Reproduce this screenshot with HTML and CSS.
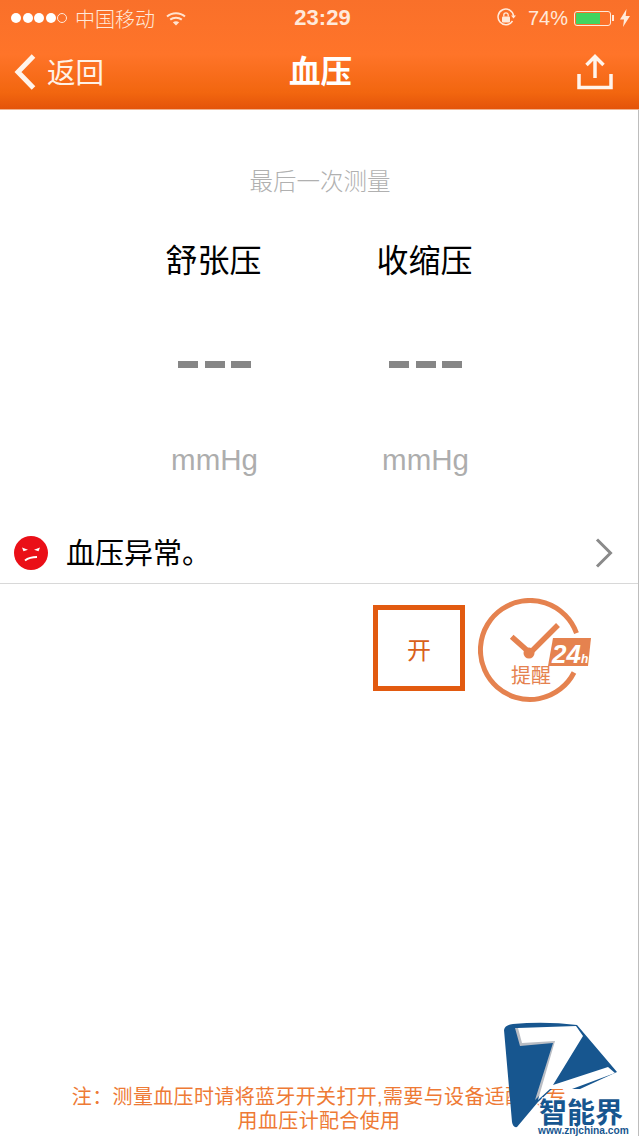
FILE: index.html
```html
<!DOCTYPE html>
<html lang="zh-CN">
<head>
  <meta charset="UTF-8" />
  <meta name="viewport" content="width=device-width, initial-scale=1.0" />
  <title>血压</title>
  <link rel="stylesheet" href="styles.css">
</head>
<body>
  <div class="page">

    <header class="topbar">
      <div class="status">
        <div class="status-left">
          <span class="signal"><i></i><i></i><i></i><i></i><i class="off"></i></span>
          <span class="carrier">中国移动</span>
          <svg class="wifi" viewBox="0 0 20 15" width="20" height="15">
            <path d="M1 5.500C6 1 14 1 19 5.500" fill="none" stroke="#ffe3d0" stroke-width="2"/>
            <path d="M4.200 8.600C7.500 6 12.500 6 15.800 8.600" fill="none" stroke="#ffe3d0" stroke-width="2"/>
            <path d="M10 14.500L6.800 11.200C8.800 9.800 11.200 9.800 13.200 11.200Z" fill="#ffe3d0"/>
          </svg>
        </div>
        <div class="clock">23:29</div>
        <div class="status-right">
          <svg viewBox="0 0 20 20" width="20" height="20">
            <path d="M16.500 13A7.800 7.800 0 1 1 17.600 8" fill="none" stroke="#ffe9da" stroke-width="1.500"/>
            <path d="M15 7.500h5l-2.500 3z" fill="#ffe9da"/>
            <rect x="6" y="8.500" width="8" height="6" rx="1" fill="#ffe9da"/>
            <path d="M7.800 8.500V7a2.200 2.200 0 0 1 4.400 0v1.500" fill="none" stroke="#ffe9da" stroke-width="1.300"/>
          </svg>
          <span class="percent">74%</span>
          <span class="battery"><span class="battery-fill" style="width: 74%"></span></span>
          <span class="battery-tip"></span>
          <svg class="bolt" viewBox="0 0 10 18" width="10" height="18">
            <path d="M6.500 0L0 10.500h4L3 18l7-11H5.700z" fill="#ffe9da"/>
          </svg>
        </div>
      </div>
      <nav class="nav">
        <div class="back">
          <svg viewBox="0 0 22 36" width="22" height="36">
            <path d="M19.500 2L4 18l15.500 16" fill="none" stroke="#fff4ec" stroke-width="5"/>
          </svg>
          <span class="back-label">返回</span>
        </div>
        <div class="nav-title">血压</div>
        <svg class="share" viewBox="0 0 36 36" width="36" height="36">
          <path d="M18 24V3M9.500 11L18 2.500 26.500 11" fill="none" stroke="#fff4ec" stroke-width="3.500"/>
          <path d="M2 20v13.500h32V20" fill="none" stroke="#fff4ec" stroke-width="3.500"/>
        </svg>
      </nav>
    </header>

    <main class="content">
      <div class="caption">最后一次测量</div>

      <div class="readings">
        <div class="reading">
          <div class="reading-name">舒张压</div>
          <div class="dashes"><i></i><i></i><i></i></div>
          <div class="reading-unit">mmHg</div>
        </div>
        <div class="reading">
          <div class="reading-name">收缩压</div>
          <div class="dashes"><i></i><i></i><i></i></div>
          <div class="reading-unit">mmHg</div>
        </div>
      </div>

      <div class="result-row">
        <svg viewBox="0 0 34 34" width="34" height="34">
          <circle cx="17" cy="17" r="17" fill="#ea0f17"/>
          <path d="M8 11.500l6 2.300-4.500 1.500zM26 11.500l-6 2.300 4.500 1.500z" fill="#fff"/>
          <path d="M11 24.500c3-2.300 7-3.500 12-3.500" fill="none" stroke="#fff" stroke-width="2"/>
        </svg>
        <span class="result-text">血压异常。</span>
        <svg class="chevron" viewBox="0 0 18 30" width="18" height="30">
          <path d="M2 1.500L15.500 15 2 28.500" fill="none" stroke="#8a8a8a" stroke-width="3"/>
        </svg>
      </div>

      <div class="reminder">
        <div class="switch-box">开</div>
        <svg class="alarm" viewBox="0 0 114 104" width="114" height="104">
          <path d="M98.500 35.200A49.500 49.500 0 1 0 96 74.500" fill="none" stroke="#e5824f" stroke-width="5"/>
          <path d="M33.700 38.700L52 55 80 27" fill="none" stroke="#e5824f" stroke-width="5.500"/>
          <circle cx="51" cy="55" r="5.500" fill="#e5824f"/>
          <path d="M75 40H113L110 68H70Z" fill="#e5824f"/>
          <text class="alarm-hours" x="74" y="65">24<tspan class="alarm-h">h</tspan></text>
          <text class="alarm-label" x="33" y="85">提醒</text>
        </svg>
      </div>

      <p class="note">注&#xFF1A;测量血压时请将蓝牙开关打开,需要与设备适配的专<br>用血压计配合使用</p>
    </main>

    <!-- site mark in the bottom corner -->
    <svg class="sitemark" viewBox="500 1020 130 116" width="130" height="116">
      <path d="M504 1030Q505 1025 513 1024Q545 1021 577 1025L617 1072L580 1089L552 1089L538 1102L517 1127Q513 1128 512 1122Z" fill="#17568f"/>
      <path d="M535 1100L553 1043L520 1046L515 1028L577 1028L581 1036L545 1090Z" fill="#b9bdc4"/>
      <path d="M518 1028L576 1026L583 1036L553 1085L608 1067L615 1073L572 1089L550 1089L538 1100L555 1041L522 1043Z" fill="#fff"/>
      <text class="mark-name" x="539" y="1123">智能界</text>
      <text class="mark-url" x="538" y="1134">www.znjchina.com</text>
    </svg>
  </div>
</body>
</html>
```

FILE: styles.css
```css
body {
  margin: 0;
  font-family: 'Liberation Sans', 'Noto Sans CJK SC', sans-serif;
  background: #fff;
  overflow: hidden;
}

.page {
  position: relative;
  height: 1136px;
  display: flex;
  flex-direction: column;
  overflow: hidden;
}

/* top bar */
.topbar {
  height: 109px;
  color: #fff;
  background: linear-gradient(#f9702a 0%, #ff7429 50%, #f2660f 85%, #e4540a 100%);
  border-bottom: 1px solid #f0b38f;
}

.status {
  height: 36px;
  display: grid;
  grid-template-columns: 1fr auto 1fr;
  align-items: center;
  padding: 0 9px 0 11px;
  color: #ffe9da;
}

.status-left, .status-right {
  display: flex;
  align-items: center;
}

.status-right {
  justify-content: flex-end;
}

.signal {
  display: flex;
  gap: 1.500px;
}

.signal i {
  width: 10px;
  height: 10px;
  border-radius: 50%;
  background: #fff;
}

.signal i.off {
  box-sizing: border-box;
  background: none;
  border: 1px solid #ffe9da;
}

.carrier {
  margin-left: 8px;
  font-size: 20px;
  font-weight: 300;
}

.wifi {
  margin-left: 11px;
}

.clock {
  font-size: 22px;
  font-weight: bold;
  padding-left: 4px;
}

.percent {
  margin-left: 12px;
  font-size: 20px;
}

.battery {
  margin-left: 6px;
  width: 37px;
  height: 15px;
  box-sizing: border-box;
  padding: 1px;
  border: 1px solid #ffe9da;
  border-radius: 3px;
}

.battery-fill {
  display: block;
  height: 100%;
  background: #42d45f;
}

.battery-tip {
  width: 2px;
  height: 6px;
  margin-left: 1px;
  background: #ffe9da;
}

.bolt {
  margin-left: 6px;
}

.nav {
  height: 71px;
  display: flex;
  align-items: center;
  justify-content: space-between;
  padding: 0 26px 2px 14px;
}

.back {
  display: flex;
  align-items: center;
  gap: 11px;
  font-size: 28.500px;
  color: #fff1e6;
}

.back-label {
  padding-bottom: 3px;
}

.nav-title {
  font-size: 31.500px;
  font-weight: bold;
  padding: 0 40px 5px 0;
}

/* readings */
.content {
  flex: 1;
  display: flex;
  flex-direction: column;
  border-right: 1px solid #bdbdbd;
}

.caption {
  margin-top: 57px;
  line-height: 30px;
  font-size: 23.500px;
  font-weight: 300;
  text-align: center;
  padding-left: 2px;
  color: #b0b0b0;
}

.readings {
  margin-top: 44px;
  display: flex;
  justify-content: center;
  gap: 35px;
}

.reading {
  width: 176px;
  display: flex;
  flex-direction: column;
  align-items: center;
}

.reading-name {
  line-height: 40px;
  font-size: 32px;
  color: #000;
}

.dashes {
  margin-top: 80px;
  margin-left: 2px;
  display: flex;
  gap: 6.500px;
}

.dashes i {
  width: 20px;
  height: 7px;
  background: #868686;
}

.reading-unit {
  margin-top: 72px;
  margin-left: 2px;
  line-height: 40px;
  font-size: 29.500px;
  color: #adadad;
}

.result-row {
  margin-top: 50px;
  height: 45px;
  padding: 0 25px 8px 14px;
  display: flex;
  align-items: center;
  border-bottom: 1px solid #d8d8d8;
}

.result-text {
  flex: 1;
  margin-left: 18px;
  padding-bottom: 4px;
  font-size: 29px;
  color: #000;
}

.reminder {
  display: flex;
  justify-content: flex-end;
  align-items: flex-start;
  padding: 14px 46px 0 0;
}

.switch-box {
  width: 92px;
  height: 86px;
  margin: 7px 13px 0 0;
  box-sizing: border-box;
  display: flex;
  align-items: center;
  justify-content: center;
  border: 5px solid #e25a10;
  font-size: 24px;
  color: #d9601a;
}

.alarm-hours {
  font-size: 26px;
  font-weight: bold;
  font-style: italic;
  fill: #fff;
}

.alarm-h {
  font-size: 12px;
}

.alarm-label {
  font-size: 20px;
  fill: #e5824f;
}

.note {
  margin: auto 0 3px;
  line-height: 24px;
  font-size: 20px;
  letter-spacing: 0.350px;
  text-align: center;
  color: #ee7a35;
}

/* site mark */
.sitemark {
  position: absolute;
  left: 500px;
  top: 1020px;
}

.mark-name {
  font-size: 28px;
  font-weight: bold;
  fill: #17568f;
  stroke: #fff;
  stroke-width: 2px;
  paint-order: stroke;
}

.mark-url {
  font-size: 10.200px;
  font-weight: bold;
  fill: #17568f;
}
```
